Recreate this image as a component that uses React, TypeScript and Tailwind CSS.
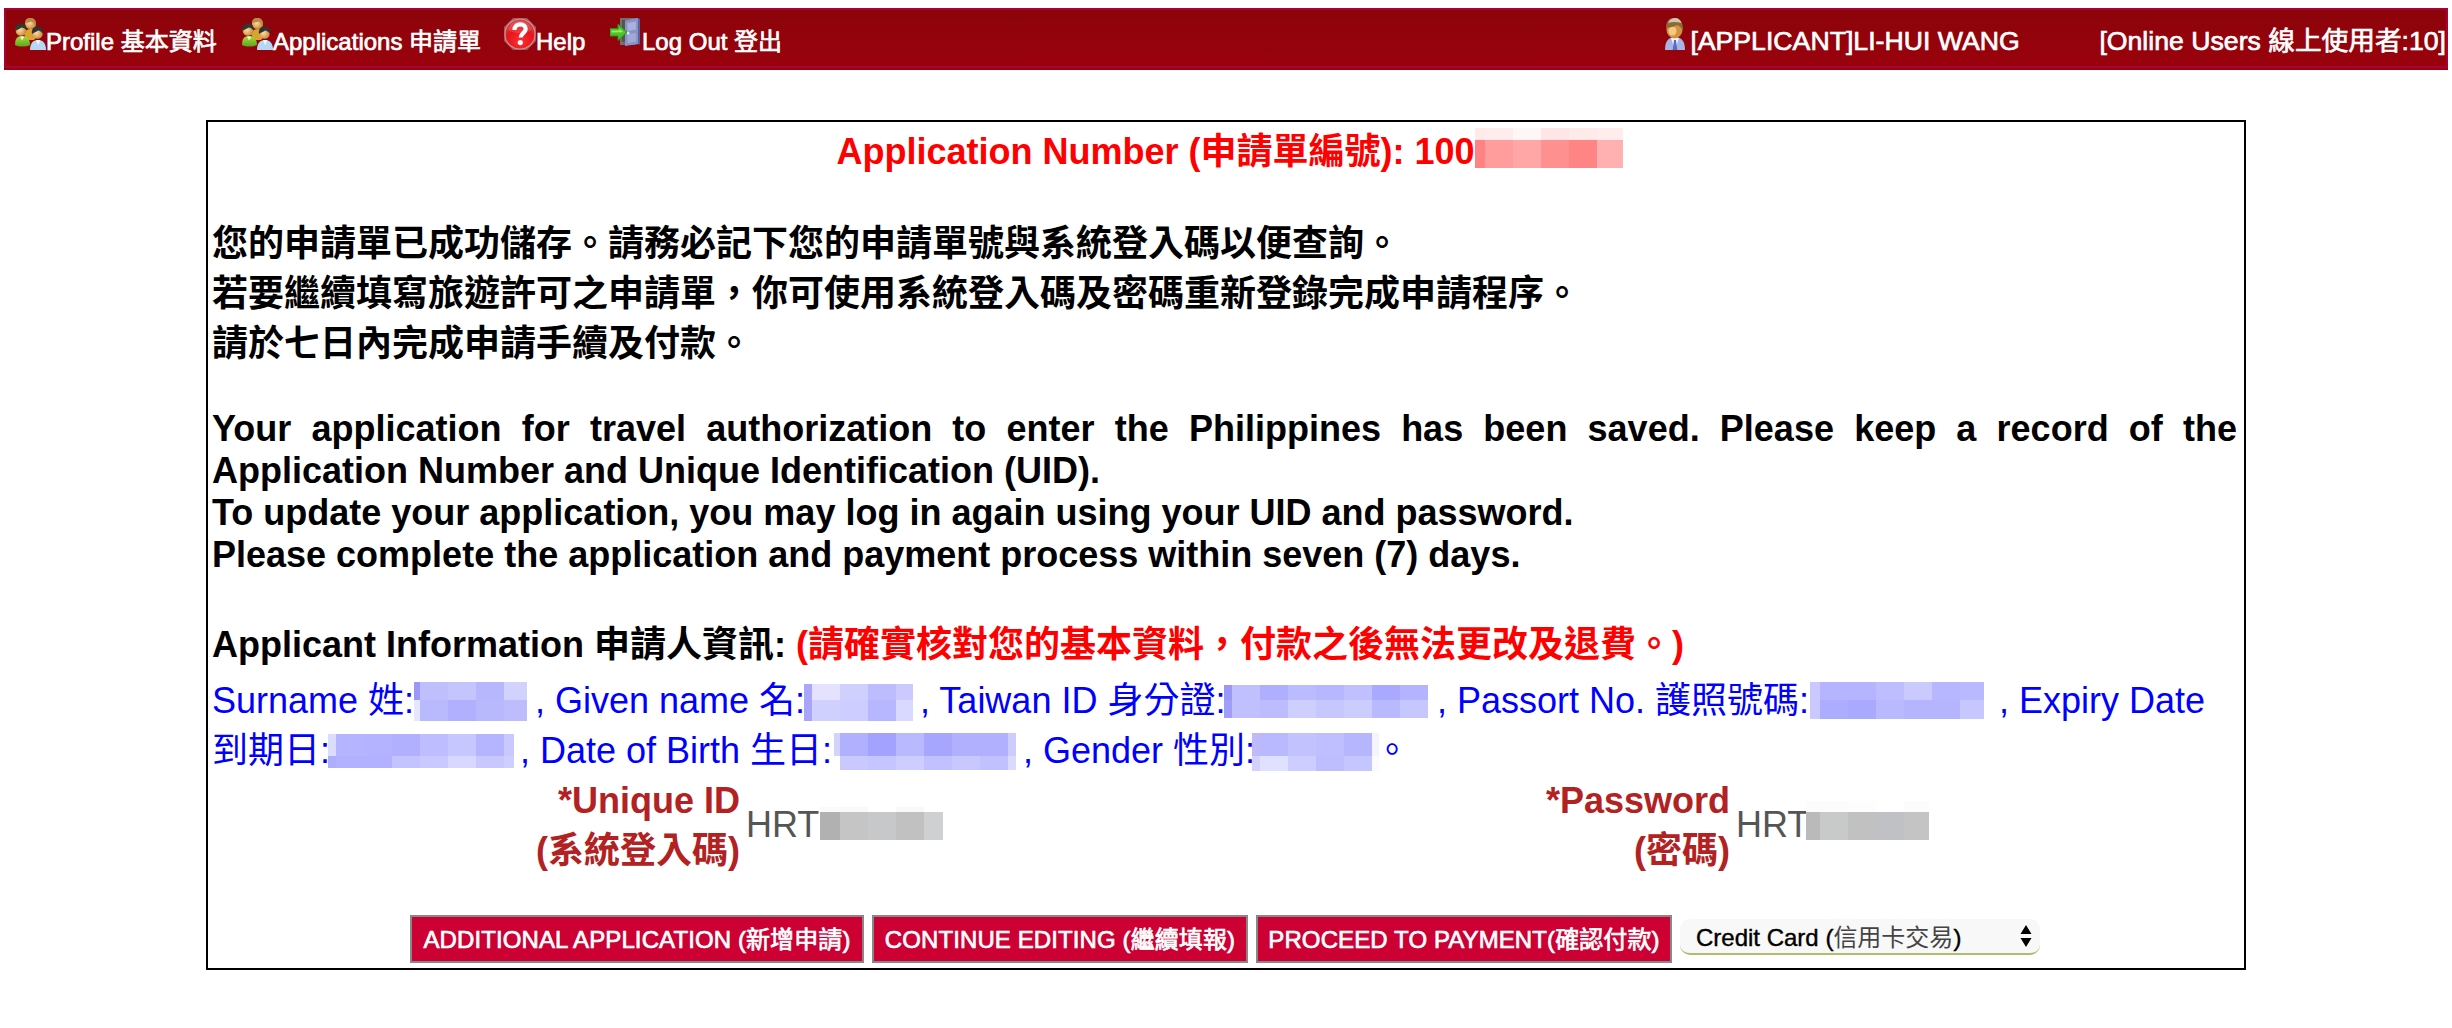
import React from "react";

type MosaicProps = {
  // column edges and row edges, in px
  cols: number[];
  rows: number[];
  colors: string[][];
  className?: string;
};

function Mosaic({ cols, rows, colors, className = "" }: MosaicProps) {
  const width = cols[cols.length - 1];
  const height = rows[rows.length - 1];
  return (
    <svg
      width={width}
      height={height}
      shapeRendering="crispEdges"
      className={`block shrink-0 ${className}`}
      aria-hidden="true"
    >
      {colors.map((row, y) =>
        row.map((fill, x) => (
          <rect
            key={`${x}-${y}`}
            x={cols[x]}
            y={rows[y]}
            width={cols[x + 1] - cols[x]}
            height={rows[y + 1] - rows[y]}
            fill={fill}
          />
        ))
      )}
    </svg>
  );
}

function UsersIcon() {
  return (
    <svg width="32" height="32" viewBox="0 0 32 32" className="block shrink-0">
      <defs>
        <radialGradient id="face" cx="0.4" cy="0.45" r="0.6">
          <stop offset="0" stopColor="#fbdca0" />
          <stop offset="1" stopColor="#c98a3c" />
        </radialGradient>
        <linearGradient id="green" x1="0" y1="0" x2="0" y2="1">
          <stop offset="0" stopColor="#a9dc3c" />
          <stop offset="1" stopColor="#5da51a" />
        </linearGradient>
      </defs>
      <path d="M10 16c1-4 4-5 7-5s6 2 7 6l-4 5h-7z" fill="#d9a52c" />
      <circle cx="16.500" cy="5.500" r="5.500" fill="url(#face)" />
      <path d="M11 5c0-4 3-5.500 6-5 4 0 5.500 4 4.500 9-1-3-2-5-4-5.500-2 1-4 1-6.500 1.500z" fill="#b98a48" />
      <path d="M1 27c0-6 2-9 7-9s8 3 8 9c-4 2-11 2-15 0z" fill="url(#green)" />
      <path d="M6 18.500l2 4 2.500-4z" fill="#eef7d8" />
      <circle cx="7" cy="12.500" r="5.300" fill="url(#face)" />
      <path d="M1.500 13c-.8-5 2-7.500 6-7.500 3.500 0 5.500 2.500 5 7-1.500-2-3-3-5-3-2 1.500-4 2-6 3.500z" fill="#2d3a30" />
      <path d="M16 32c0-6 2.500-10 8-10s8 4 8 10z" fill="#b7d8f4" />
      <path d="M22 22l2 5 2.500-5z" fill="#f4faff" />
      <circle cx="23.500" cy="15.500" r="5.300" fill="url(#face)" />
      <path d="M18 16c-.8-5 2-7.500 6-7.500 3.500 0 5.500 2.500 5 7.500-1.500-2-3-3.500-5-3.500-2 1.500-4 2-6 3.500z" fill="#2d3336" />
    </svg>
  );
}

function HelpIcon() {
  return (
    <svg width="32" height="32" viewBox="0 0 32 32" className="block shrink-0">
      <defs>
        <radialGradient id="help" cx="0.5" cy="0.75" r="0.75">
          <stop offset="0" stopColor="#ff3030" />
          <stop offset="0.6" stopColor="#e6131b" />
          <stop offset="1" stopColor="#d9484c" />
        </radialGradient>
      </defs>
      <path d="M9 0h14l9 9v14l-9 9H9l-9-9V9z" fill="#a5585a" />
      <circle cx="16" cy="16" r="15.500" fill="#c99a9b" />
      <circle cx="16" cy="16" r="14.500" fill="url(#help)" />
      <path d="M4 12C6 5 11 3 16 3s10 2 12 9c-6 4-18 4-24 0z" fill="#fff" opacity="0.14" />
      <path
        d="M10.500 12C10.500 8 13.300 6.300 16.200 6.300c3.200 0 5.500 1.800 5.500 4.700 0 3.800-5 4-5 8.600"
        fill="none"
        stroke="#fff"
        strokeWidth="4.200"
      />
      <circle cx="16.300" cy="24.600" r="2.600" fill="#fff" />
    </svg>
  );
}

function LogoutIcon() {
  return (
    <svg width="32" height="32" viewBox="0 0 32 32" className="block shrink-0">
      <path d="M10 0h18v25l-3 2H10z" fill="#6f7172" />
      <path d="M12 2h6v22h-6z" fill="#58534d" />
      <path d="M15 2.500L28 0v26l-13 2z" fill="#8b92c8" />
      <path d="M17.500 5l8.500-1.500v8L17.500 13z" fill="#a9b1de" />
      <path d="M17.500 16l8.500-1v8.500L17.500 25z" fill="#a0a8d8" />
      <path d="M28 0l2 1v25l-2 1z" fill="#5d6399" />
      <circle cx="18" cy="15" r="1.500" fill="#e3e6f5" />
      <path d="M0 10.500h8V6l9 8.200-9 8.300V18H0z" fill="#4cc22b" stroke="#2c8f1a" />
      <path d="M1.500 12.500h8v-2l4 3.700-12 .3z" fill="#9bea6c" />
    </svg>
  );
}

function PersonIcon() {
  return (
    <svg width="22" height="32" viewBox="0 0 22 32" className="block shrink-0">
      <path d="M1 32c0-8 3-13 10-13s10 5 10 13z" fill="#a9b4e6" />
      <path d="M7 20l4 12 4-12z" fill="#f3f5ff" />
      <path d="M10 22h2l1.300 10H8.700z" fill="#5b6cc0" />
      <ellipse cx="10.500" cy="11.500" rx="8" ry="9" fill="#d39343" />
      <ellipse cx="8.500" cy="13" rx="4" ry="4.500" fill="#f4c983" />
      <path d="M2 10C2 3 5 0 10.500 0S19.500 4 19 13c-1.500-3-3-5-6-6-3 2-7 2-11 3z" fill="#8a6a35" />
      <path d="M4 5c1.500-3.500 4-5 7-5 3.500 0 5.500 2 6.500 5-4-1-9-1.500-13.500 0z" fill="#cfc6b0" />
    </svg>
  );
}

type NavItemProps = {
  icon: React.ReactNode;
  label: string;
  className: string;
};

function NavItem({ icon, label, className }: NavItemProps) {
  return (
    <a href="#" className={`flex items-start ${className}`}>
      {icon}
      <span className="mt-2 text-[24px] leading-8">{label}</span>
    </a>
  );
}

function NavBar() {
  return (
    <nav className="mt-2 ml-1 flex h-[62px] w-[2444px] flex-col bg-[#98020c] text-white">
      <div className="flex h-[60px] items-start justify-between border-2 border-[#a80038] bg-linear-to-b from-[#8c030a] to-[#9a020c] pt-2 pl-2 whitespace-nowrap [-webkit-text-stroke:0.7px_white]">
        <div className="flex">
          <NavItem icon={<UsersIcon />} label="Profile 基本資料" className="w-[227px]" />
          <NavItem icon={<UsersIcon />} label="Applications 申請單" className="w-[263px]" />
          <NavItem icon={<HelpIcon />} label="Help" className="w-[106px]" />
          <NavItem icon={<LogoutIcon />} label="Log Out 登出" className="" />
        </div>
        <div className="flex items-start text-[26.67px] leading-8">
          <PersonIcon />
          <span className="mt-[7px] ml-1 w-[409px]">[APPLICANT]LI-HUI WANG</span>
          <span className="mt-[7px]">[Online Users 線上使用者:10]</span>
        </div>
      </div>
    </nav>
  );
}

function SurnameLine() {
  return (
    <div className="flex">
      <span className="w-[202px]">Surname 姓:</span>
      <Mosaic
        className="mt-[6px]"
        cols={[0, 6, 34, 62, 90, 113]}
        rows={[0, 18, 39]}
        colors={[
          ["#9c97f9", "#bfbffe", "#c5c5fe", "#b7b7fd", "#d2d2fe"],
          ["#e6e6ff", "#b9b9fd", "#b0b0fe", "#b8b8fd", "#bdbdfd"],
        ]}
      />
      <span className="ml-2 w-[269px]">, Given name 名:</span>
      <Mosaic
        className="mt-2"
        cols={[0, 8, 36, 64, 92, 109]}
        rows={[0, 16, 37]}
        colors={[
          ["#aaa6fb", "#e4e2ff", "#d0d0ff", "#bcbcfe", "#cacaff"],
          ["#a9a5fb", "#d0d0ff", "#cdcdff", "#b7b7ff", "#d9d9ff"],
        ]}
      />
      <span className="ml-[7px] w-[304px]">, Taiwan ID 身分證:</span>
      <Mosaic
        className="mt-[9px]"
        cols={[0, 8, 36, 64, 92, 120, 148, 176, 204]}
        rows={[0, 15, 33]}
        colors={[
          ["#9c98fa", "#c0c0ff", "#afafff", "#bbbbff", "#b7b7ff", "#c0c0ff", "#a9a9ff", "#b3b3ff"],
          ["#a19dfb", "#c0c0ff", "#bcbcff", "#cfcfff", "#c7c7ff", "#cccdff", "#b9b9ff", "#c7c7ff"],
        ]}
      />
      <span className="ml-[9px] w-[373px]">, Passort No. 護照號碼:</span>
      <Mosaic
        className="mt-[6px]"
        cols={[0, 10, 38, 66, 94, 122, 150, 174]}
        rows={[0, 18, 37]}
        colors={[
          ["#c9c9ff", "#b4b4ff", "#b4b4ff", "#bdbdff", "#cacaff", "#b7b7ff", "#b9b9ff"],
          ["#c9c9ff", "#adadff", "#a9a9ff", "#b9b9ff", "#b4b4ff", "#b5b5ff", "#c7c7ff"],
        ]}
      />
      <span className="ml-[15px]">, Expiry Date</span>
    </div>
  );
}

function ExpiryLine() {
  return (
    <div className="flex">
      <span className="w-[116px]">到期日:</span>
      <Mosaic
        className="mt-2"
        cols={[0, 8, 36, 64, 92, 120, 148, 176, 186]}
        rows={[0, 22, 34]}
        colors={[
          ["#dcdcff", "#b4b4ff", "#b3b3ff", "#b0b0ff", "#bdbdff", "#c7c7ff", "#b5b5ff", "#c9c9ff"],
          ["#aeaefb", "#b1b1ff", "#b1b1ff", "#c3c3ff", "#c9c9ff", "#d8d8ff", "#c8c8ff", "#cecfff"],
        ]}
      />
      <span className="ml-[6px] w-[314px]">, Date of Birth 生日:</span>
      <Mosaic
        className="mt-[7px]"
        cols={[0, 6, 34, 62, 90, 118, 146, 174, 182]}
        rows={[0, 23, 37]}
        colors={[
          ["#d3d3ff", "#b0b0ff", "#a3a3ff", "#b9b9ff", "#a6a6ff", "#b0b0ff", "#b0b0ff", "#ccccff"],
          ["#ffffff", "#c9c9ff", "#c5c5ff", "#cdcdff", "#c1c1ff", "#c8c8ff", "#c1c1ff", "#dadaff"],
        ]}
      />
      <span className="ml-[7px] w-[229px]">, Gender 性別:</span>
      <Mosaic
        className="mt-[7px]"
        cols={[0, 8, 36, 64, 92, 120, 127]}
        rows={[0, 23, 38]}
        colors={[
          ["#c0bafb", "#b9b9ff", "#c2c2ff", "#bfbfff", "#b6b6ff", "#f4f4ff"],
          ["#d3d0fc", "#e0e0ff", "#cdcdff", "#bebeff", "#c5c5ff", "#fafaff"],
        ]}
      />
      <span className="-ml-[5px]">。</span>
    </div>
  );
}

function Credentials() {
  return (
    <div className="flex h-[100px]">
      <div className="w-[528px] text-right font-bold text-[#b22222]">
        *Unique ID
        <br />
        (系統登入碼)
      </div>
      <div className="ml-[6px] flex w-[455px] text-[#555]">
        <span className="mt-6 w-[74px]">HRT</span>
        <Mosaic
          className="mt-[31px]"
          cols={[0, 20, 48, 76, 104, 123]}
          rows={[0, 5, 33]}
          colors={[
            ["#fafafa", "#f9f9f9", "#ffffff", "#f9faf8", "#ffffff"],
            ["#b1b1b1", "#c5c5c5", "#c7c8ca", "#c1c1c1", "#cfd0d2"],
          ]}
        />
      </div>
      <div className="w-[529px] text-right font-bold text-[#b22222]">
        *Password
        <br />
        (密碼)
      </div>
      <div className="ml-[6px] flex text-[#555]">
        <span className="mt-6 w-[70px]">HRT</span>
        <Mosaic
          className="mt-[25px]"
          cols={[0, 14, 42, 70, 98, 123]}
          rows={[0, 11, 39]}
          colors={[
            ["#fcfcfc", "#fcfcfc", "#fdfdfd", "#ffffff", "#fcfcfc"],
            ["#bababa", "#c8caca", "#c1c1c1", "#c0c1c5", "#c4c4c4"],
          ]}
        />
      </div>
    </div>
  );
}

function ActionButton({ label, className }: { label: string; className: string }) {
  return (
    <button
      type="button"
      className={`h-12 border-2 border-[#888] bg-[#cc0033] text-center text-[24px] leading-[43px] tracking-[0.1px] whitespace-nowrap text-white [-webkit-text-stroke:0.7px_white] ${className}`}
    >
      {label}
    </button>
  );
}

function Actions() {
  return (
    <div className="mt-[39px] ml-[198px] flex gap-2">
      <ActionButton label="ADDITIONAL APPLICATION (新增申請)" className="w-[454px]" />
      <ActionButton label="CONTINUE EDITING (繼續填報)" className="w-[376px]" />
      <ActionButton label="PROCEED TO PAYMENT(確認付款)" className="w-[416px]" />
      <div className="mt-1 flex h-9 w-[360px] items-center justify-between rounded-[10px] border-b-2 border-[#b1bd6c] bg-[#f8f8f8] pr-2 pl-4 text-[24px] leading-[34px] text-black">
        <span className="mt-[3px] [-webkit-text-stroke:0.4px_black]">
          Credit Card (
          <span className="text-[#444] [-webkit-text-stroke:0]">信用卡交易</span>)
        </span>
        <svg width="12" height="22" viewBox="0 0 12 22" className="block">
          <path d="M6 0l5.500 9H.5zM6 22L.5 13h11z" fill="#000" />
        </svg>
      </div>
    </div>
  );
}

export default function App() {
  return (
    <main className="flow-root h-[1028px] w-[2452px] overflow-hidden bg-white font-['Liberation_Sans','Noto_Sans_CJK_TC',sans-serif]">
      <NavBar />
      <section className="mt-[50px] ml-[206px] h-[850px] w-[2040px] border-2 border-black px-1 pt-[5px] text-[36px] leading-[50px] text-black">
        <h1 className="flex justify-center pl-[7px] font-bold text-[#ff0000]">
          <span>Application Number (申請單編號): 100</span>
          <Mosaic
            className="mt-[1px]"
            cols={[0, 10, 38, 66, 94, 122, 148]}
            rows={[0, 12, 40]}
            colors={[
              ["#ffe9e9", "#ffecec", "#fff6f6", "#ffe6e6", "#ffeaea", "#ffecec"],
              ["#ff8383", "#ff9d9d", "#ffa7a7", "#ff9090", "#ff8484", "#ffb0b0"],
            ]}
          />
        </h1>

        <div className="mt-[42px] font-bold">
          <p>您的申請單已成功儲存。請務必記下您的申請單號與系統登入碼以便查詢。</p>
          <p>若要繼續填寫旅遊許可之申請單，你可使用系統登入碼及密碼重新登錄完成申請程序。</p>
          <p>請於七日內完成申請手續及付款。</p>
        </div>

        <div className="mt-[39px] pr-[3px] text-justify leading-[42px] font-bold">
          <p>
            Your application for travel authorization to enter the Philippines
            has been saved. Please keep a record of the Application Number and
            Unique Identification (UID).
          </p>
          <p>To update your application, you may log in again using your UID and password.</p>
          <p>Please complete the application and payment process within seven (7) days.</p>
        </div>

        <h2 className="mt-11 font-bold">
          Applicant Information 申請人資訊:{" "}
          <span className="text-[#ff0000]">(請確實核對您的基本資料，付款之後無法更改及退費。)</span>
        </h2>

        <div className="mt-[6px] whitespace-nowrap text-[#0000ff]">
          <SurnameLine />
          <ExpiryLine />
        </div>

        <Credentials />
        <Actions />
      </section>
    </main>
  );
}
